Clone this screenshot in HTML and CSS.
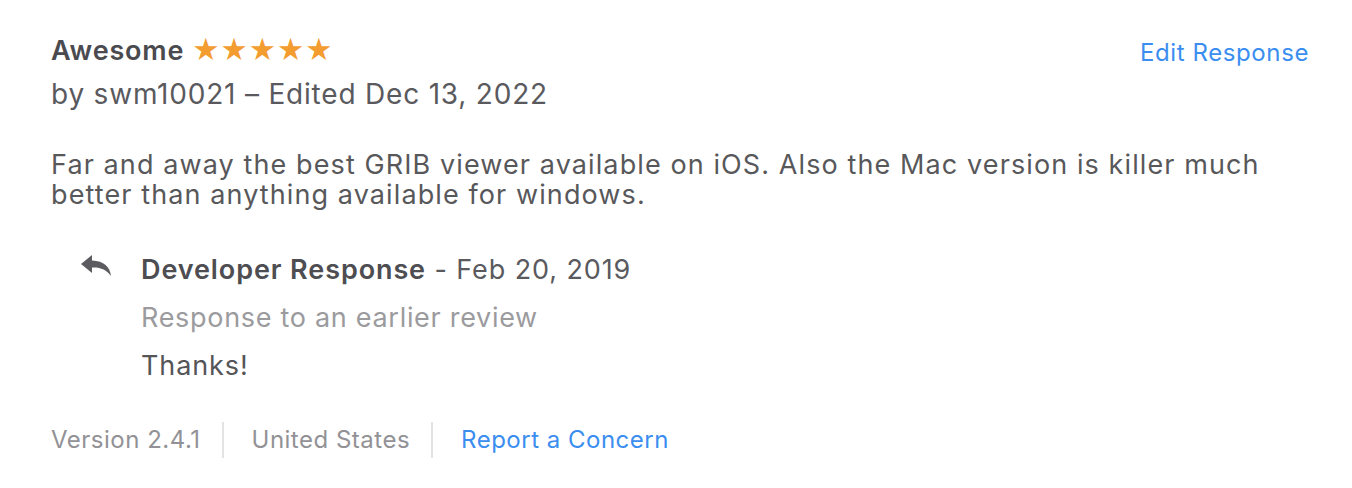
FILE: index.html
```html
<!DOCTYPE html>
<html lang="en">

<head>
    <meta charset="UTF-8">
    <meta name="viewport" content="width=device-width, initial-scale=1.0">
    <title>Review</title>
    <link rel="stylesheet" href="styles.css">
</head>

<body>
    <section class="review">
        <div class="review-head">
            <div>
                <h3 class="review-title">Awesome <span class="stars">★★★★★</span></h3>
                <div class="byline">by swm10021 – Edited Dec 13, 2022</div>
            </div>
            <a class="link edit" href="#">Edit Response</a>
        </div>

        <p class="review-body">Far and away the best GRIB viewer available on iOS. Also the Mac version is killer much better than anything available for windows.</p>

        <div class="response">
            <svg class="reply-icon" width="34" height="24" viewBox="0 0 34 24">
                <path d="M12 2 L1 11 L12 20 L12 14.5 C20 14 26.5 16.5 31 23 C30 14 24 8 12 7.5 Z" fill="#5c5c60" />
            </svg>
            <div class="response-text">
                <div class="response-head"><b>Developer Response</b> - Feb 20, 2019</div>
                <div class="response-sub">Response to an earlier review</div>
                <div class="response-body">Thanks!</div>
            </div>
        </div>

        <div class="meta">
            <span>Version 2.4.1</span>
            <span>United States</span>
            <a class="link" href="#">Report a Concern</a>
        </div>
    </section>
</body>

</html>
```

FILE: styles.css
```css
body {
    margin: 0;
    background: #fff;
    font-family: Inter, "Noto Sans", sans-serif;
    color: #555558;
}

.review {
    padding: 33px 43px 0 51px;
}

.review-head {
    display: flex;
    justify-content: space-between;
    align-items: flex-start;
}

.review-title {
    margin: 0;
    font-size: 27px;
    font-weight: 600;
    line-height: 36px;
    letter-spacing: 0.8px;
    color: #4a4a4f;
}

.stars {
    color: #f39c2f;
    font-size: 27px;
    letter-spacing: 0;
}

.byline {
    font-size: 28px;
    line-height: 50px;
    letter-spacing: 0.8px;
    color: #5a5a5e;
}

.link {
    color: #3b8ef0;
    text-decoration: none;
}

.edit {
    font-size: 24px;
    line-height: 40px;
    letter-spacing: 0.6px;
}

.review-body {
    margin: 31px 0 0;
    font-size: 27px;
    line-height: 30px;
    letter-spacing: 1.1px;
    color: #58585b;
}

.response {
    display: flex;
    margin-top: 36px;
    padding-left: 29px;
}

.reply-icon {
    margin-top: 7px;
    margin-right: 27px;
}

.response-text {
    font-size: 27px;
    letter-spacing: 0.9px;
}

.response-head {
    line-height: 48px;
    color: #5a5a5e;
}

.response-head b {
    font-weight: 600;
    color: #4d4d52;
}

.response-sub {
    line-height: 48px;
    letter-spacing: 0.7px;
    color: #9b9b9e;
}

.response-body {
    line-height: 48px;
    color: #555558;
}

.meta {
    display: flex;
    align-items: center;
    margin-top: 32px;
    font-size: 24px;
    letter-spacing: 0.5px;
    color: #929296;
}

.meta > * {
    padding: 0 21px 0 28px;
    border-left: 2px solid #e3e3e5;
    line-height: 36px;
}

.meta > *:first-child {
    padding-left: 0;
    border-left: 0;
}
```
